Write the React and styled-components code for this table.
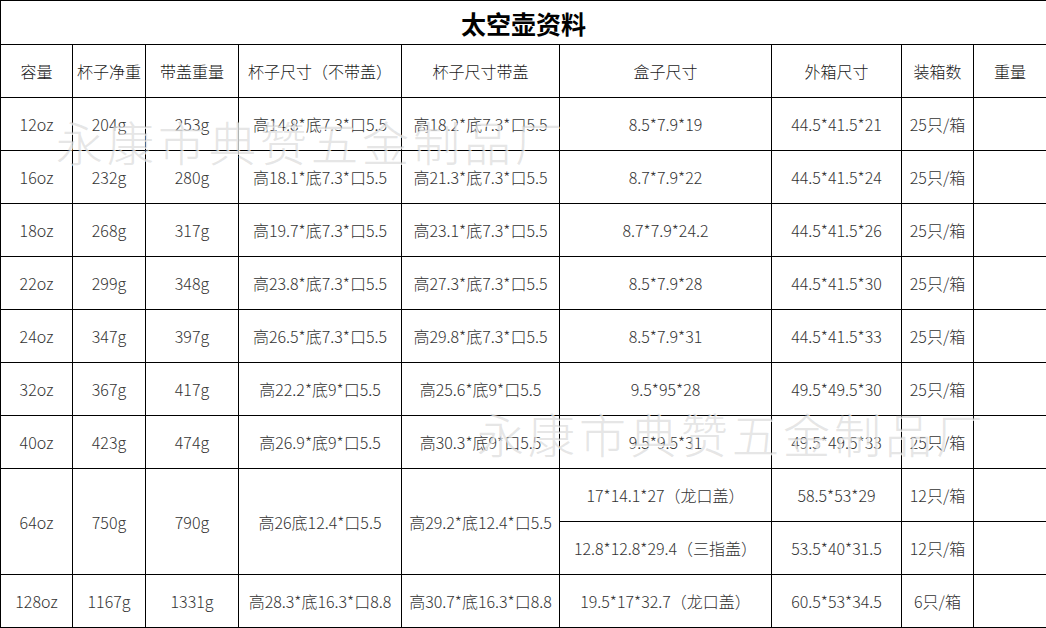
import React from 'react'
import styled, { createGlobalStyle } from 'styled-components'

const GlobalStyle = createGlobalStyle`
  html, body {
    margin: 0;
    padding: 0;
    background: #fff;
  }
  body {
    font-family: "Noto Sans CJK SC", "Microsoft YaHei", sans-serif;
  }
`

const Sheet = styled.div`
  position: relative;
  width: 1046px;
  height: 628px;
  overflow: hidden;
`

const Table = styled.table`
  border-collapse: collapse;
  table-layout: fixed;
  width: 1046px;
`

const TitleCell = styled.th`
  height: 43px;
  padding: 0;
  border: 1px solid #000;
  font-size: 25px;
  font-weight: 700;
  color: #000;
  text-align: center;
  vertical-align: middle;
`

const Cell = styled.td`
  height: 52px;
  padding: 0;
  border: 1px solid #000;
  font-size: 16px;
  font-weight: 300;
  color: ${p => (p.$head ? '#1a1a1a' : '#333')};
  text-align: center;
  vertical-align: middle;
  white-space: nowrap;
`

const Watermark = styled.div`
  position: absolute;
  left: ${p => p.$x}px;
  top: ${p => p.$y}px;
  font-size: 47px;
  font-weight: 300;
  letter-spacing: 4px;
  line-height: 1;
  color: rgba(190, 190, 190, 0.4);
  text-shadow: 1px 1px 0 rgba(255, 255, 255, 0.7);
  pointer-events: none;
  white-space: nowrap;
`

const widths = [72, 73, 93, 163, 158, 212, 130, 72, 73]

const headers = ['容量', '杯子净重', '带盖重量', '杯子尺寸（不带盖）', '杯子尺寸带盖', '盒子尺寸', '外箱尺寸', '装箱数', '重量']

const rows = [
  ['12oz', '204g', '253g', '高14.8*底7.3*口5.5', '高18.2*底7.3*口5.5', '8.5*7.9*19', '44.5*41.5*21', '25只/箱'],
  ['16oz', '232g', '280g', '高18.1*底7.3*口5.5', '高21.3*底7.3*口5.5', '8.7*7.9*22', '44.5*41.5*24', '25只/箱'],
  ['18oz', '268g', '317g', '高19.7*底7.3*口5.5', '高23.1*底7.3*口5.5', '8.7*7.9*24.2', '44.5*41.5*26', '25只/箱'],
  ['22oz', '299g', '348g', '高23.8*底7.3*口5.5', '高27.3*底7.3*口5.5', '8.5*7.9*28', '44.5*41.5*30', '25只/箱'],
  ['24oz', '347g', '397g', '高26.5*底7.3*口5.5', '高29.8*底7.3*口5.5', '8.5*7.9*31', '44.5*41.5*33', '25只/箱'],
  ['32oz', '367g', '417g', '高22.2*底9*口5.5', '高25.6*底9*口5.5', '9.5*95*28', '49.5*49.5*30', '25只/箱'],
  ['40oz', '423g', '474g', '高26.9*底9*口5.5', '高30.3*底9*口5.5', '9.5*9.5*31', '49.5*49.5*33', '25只/箱'],
]

export default function App() {
  return (
    <Sheet>
      <GlobalStyle />
      <Table>
        <colgroup>
          {widths.map((w, i) => <col key={i} style={{ width: w }} />)}
        </colgroup>
        <thead>
          <tr>
            <TitleCell colSpan={9}>太空壶资料</TitleCell>
          </tr>
        </thead>
        <tbody>
          <tr>
            {headers.map(h => <Cell key={h} $head>{h}</Cell>)}
          </tr>
          {rows.map(r => (
            <tr key={r[0]}>
              {r.map((c, i) => <Cell key={i}>{c}</Cell>)}
              <Cell />
            </tr>
          ))}
          <tr>
            <Cell rowSpan={2}>64oz</Cell>
            <Cell rowSpan={2}>750g</Cell>
            <Cell rowSpan={2}>790g</Cell>
            <Cell rowSpan={2}>高26底12.4*口5.5</Cell>
            <Cell rowSpan={2}>高29.2*底12.4*口5.5</Cell>
            <Cell>17*14.1*27（龙口盖）</Cell>
            <Cell>58.5*53*29</Cell>
            <Cell>12只/箱</Cell>
            <Cell />
          </tr>
          <tr>
            <Cell>12.8*12.8*29.4（三指盖）</Cell>
            <Cell>53.5*40*31.5</Cell>
            <Cell>12只/箱</Cell>
            <Cell />
          </tr>
          <tr>
            <Cell>128oz</Cell>
            <Cell>1167g</Cell>
            <Cell>1331g</Cell>
            <Cell>高28.3*底16.3*口8.8</Cell>
            <Cell>高30.7*底16.3*口8.8</Cell>
            <Cell>19.5*17*32.7（龙口盖）</Cell>
            <Cell>60.5*53*34.5</Cell>
            <Cell>6只/箱</Cell>
            <Cell />
          </tr>
        </tbody>
      </Table>
      <Watermark $x={56} $y={117}>永康市典赞五金制品厂</Watermark>
      <Watermark $x={477} $y={409}>永康市典赞五金制品厂</Watermark>
    </Sheet>
  )
}
